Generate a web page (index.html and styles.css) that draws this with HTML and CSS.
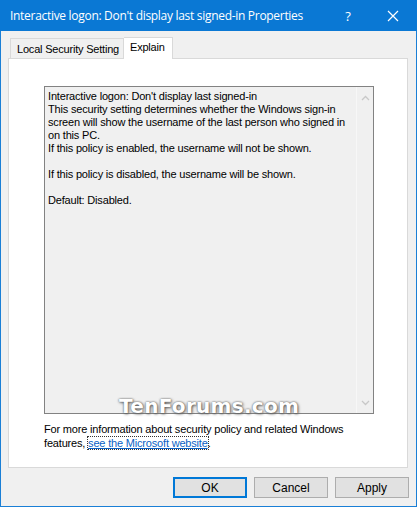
FILE: index.html
```html
<!DOCTYPE html>
<html>
<head>
<meta charset="utf-8">
<link rel="stylesheet" href="styles.css">
</head>
<body>
<div class="window">
  <div class="titlebar">
    <span class="title">Interactive logon: Don't display last signed-in Properties</span>
    <span class="help">?</span>
    <span class="close"><svg width="12" height="12" viewBox="0 0 12 12"><path d="M1 1L11 11M11 1L1 11" stroke="#fff" stroke-width="1.2" fill="none"/></svg></span>
  </div>
  <div class="content">
    <div class="tabs">
      <div class="tab">Local Security Setting</div>
      <div class="tab active">Explain</div>
    </div>
    <div class="panel">
      <div class="textbox">
        <div class="text">Interactive logon: Don't display last signed-in<br>This security setting determines whether the Windows sign-in<br>screen will show the username of the last person who signed in<br>on this PC.<br>If this policy is enabled, the username will not be shown.<br><br>If this policy is disabled, the username will be shown.<br><br>Default: Disabled.</div>
        <div class="scrollbar">
          <svg width="9" height="6" viewBox="0 0 9 6"><path d="M1 5L4.5 1.5L8 5" stroke="#c8c8c8" stroke-width="1.3" fill="none"/></svg>
          <svg width="9" height="6" viewBox="0 0 9 6"><path d="M1 1L4.5 4.5L8 1" stroke="#c8c8c8" stroke-width="1.3" fill="none"/></svg>
        </div>
      </div>
      <div class="info">For more information about security policy and related Windows<br>features, <span class="link">see the Microsoft website</span>.</div>
    </div>
    <div class="buttons">
      <div class="btn default">OK</div>
      <div class="btn">Cancel</div>
      <div class="btn">Apply</div>
    </div>
  </div>
  <div class="watermark">TenForums.com</div>
</div>
</body>
</html>
```

FILE: styles.css
```css
html, body { margin: 0; padding: 0; }
body { background: #f0f0f0; font-family: "Liberation Sans", Arial, sans-serif; }
.window {
  position: relative;
  width: 417px; height: 507px; box-sizing: border-box;
  border: 1px solid #1a7fd6; border-top: none;
  background: #f0f0f0;
  display: flex; flex-direction: column;
}
.titlebar {
  height: 31px; background: #0a78d4; color: #fff;
  display: flex; align-items: center;
  margin: 0 -1px;
  font-family: "Open Sans", "Noto Sans", sans-serif; font-size: 12px;
}
.title { padding-left: 10px; flex: 1; letter-spacing: -0.3px; }
.help { width: 20px; text-align: center; margin-right: 29px; font-size: 13px; }
.close { width: 12px; margin-right: 18px; display: flex; }
.content { padding: 6px 7px 0 7px; flex: 1; display: flex; flex-direction: column; font-size: 11px; color: #000; letter-spacing: -0.18px; }
.tabs { display: flex; align-items: flex-end; height: 21px; padding-left: 2px; }
.tab {
  height: 19px; line-height: 20px; padding: 0 4px 0 6px;
  border: 1px solid #d9d9d9; border-bottom: none;
  background: #f0f0f0; font-size: 11px; letter-spacing: -0.2px;
}
.tab.active { height: 21px; line-height: 18px; background: #fff; padding: 0 7px 0 6px; margin-bottom: -1px; position: relative; border-left: none; }
.panel {
  height: 410px; box-sizing: border-box; margin-right: 1px;
  border: 1px solid #d9d9d9; background: #fff;
  padding: 27px 0 0 35px;
}
.textbox {
  width: 330px; height: 328px; box-sizing: border-box;
  border: 1px solid #828282; background: #f0f0f0;
  display: flex;
}
.text { flex: 1; padding: 3px 0 0 3px; line-height: 13px; white-space: nowrap; overflow: hidden; }
.scrollbar {
  width: 17px; flex: none; display: flex; flex-direction: column; justify-content: space-between;
  align-items: center; padding: 8px 0 7px; box-sizing: border-box;
  border-left: 1px solid #f7f7f7;
}
.info { margin-top: 8px; line-height: 14px; white-space: nowrap; }
.link { color: #0a5fc4; text-decoration: underline; outline: 1px dotted #333; outline-offset: 0; }
.buttons { display: flex; justify-content: flex-end; gap: 7px; margin-top: 9px; letter-spacing: 0; }
.btn {
  width: 74px; height: 21px; box-sizing: border-box;
  border: 1px solid #adadad; background: #e1e1e1;
  display: flex; align-items: center; justify-content: center; font-size: 12px;
}
.btn.default { border: 2px solid #0078d7; }
.watermark {
  position: absolute; left: 118px; top: 394px;
  font-family: "DejaVu Sans", sans-serif; font-weight: bold; font-size: 20px;
  color: #fff; letter-spacing: 0.3px;
  text-shadow: 0 0 2px #555, 1px 1px 3px #666;
}
```
